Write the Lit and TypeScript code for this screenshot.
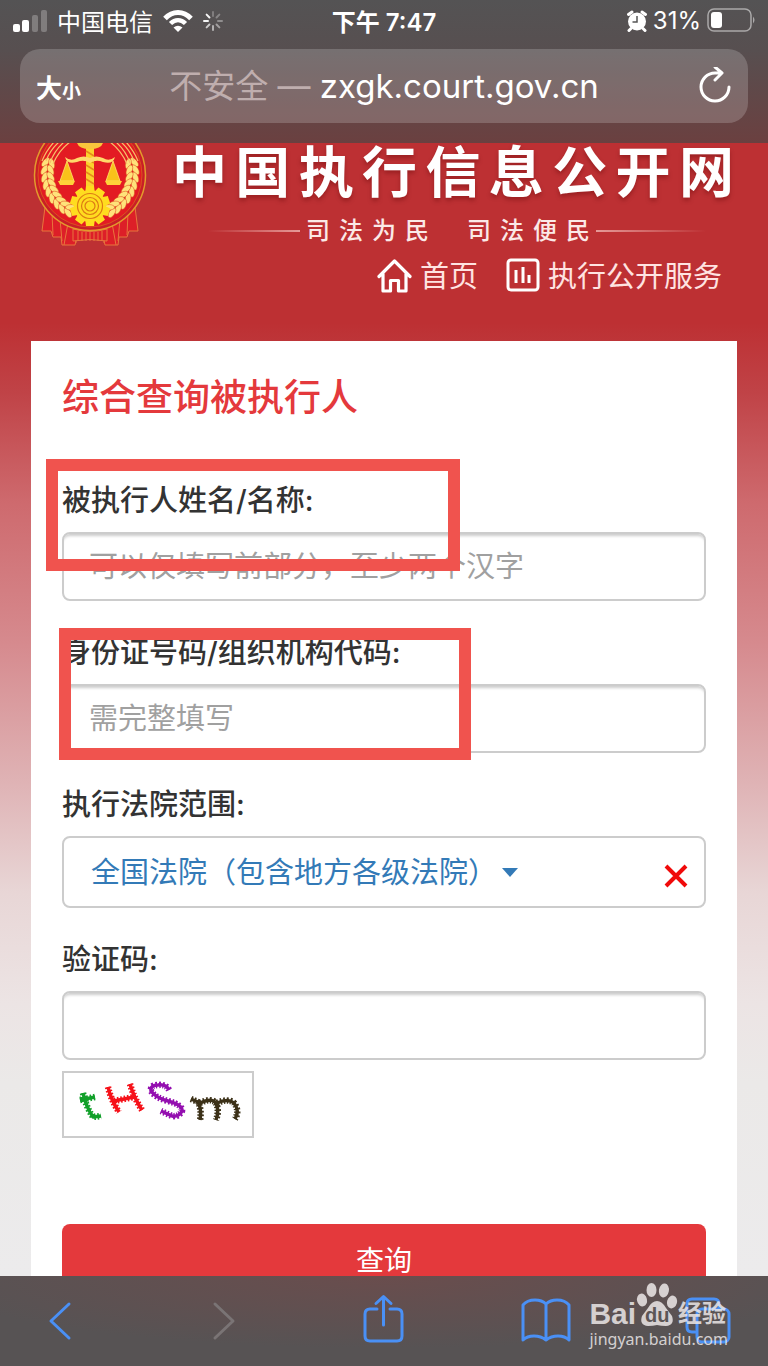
import { LitElement, html, svg, css } from "lit";
import { customElement } from "lit/decorators.js";

const chars = (text: string) => [...text].map((c) => html`<span>${c}</span>`);

@customElement("status-bar")
class StatusBar extends LitElement {
  static styles = css`
    :host { display: grid; grid-template-columns: 1fr auto 1fr; align-items: center; height: 41px; padding: 0 12px; color: #fff; font-size: 24px; }
    .side { display: flex; align-items: center; gap: 10px; }
    .end { justify-content: flex-end; gap: 6px; }
    .time { font-weight: 600; }
  `;
  render() {
    return html`
      <div class="side">
        <svg width="35" height="24" viewBox="0 0 35 24" fill="#fff">
          <rect x="1" y="15" width="7" height="8" rx="2" /><rect x="10" y="11" width="7" height="12" rx="2" />
          <g opacity=".25"><rect x="20" y="6" width="6" height="17" rx="2" /><rect x="29" y="1" width="6" height="22" rx="2" /></g>
        </svg>
        <span>中国电信</span>
        <svg width="30" height="24" viewBox="0 0 30 24" fill="none" stroke="#fff">
          <path d="M2 9.5C9.500 1.500 20.500 1.500 28 9.500" stroke-width="5" />
          <path d="M7.500 14.500C12 10 18 10 22.500 14.500" stroke-width="4.500" />
          <path d="M15 23l-4.500-4.500q4.500-3.500 9 0z" fill="#fff" stroke="none" />
        </svg>
        <svg width="20" height="22" viewBox="-10 -11 20 22" stroke="#fff" stroke-width="2" stroke-linecap="round">
          ${[0.25, 0.3, 0.35, 0.45, 0.55, 0.7, 0.95, 0.95].map((o, i) => svg`<path d="M0-5V-9" opacity=${o} transform="rotate(${i * 45})" />`)}
        </svg>
      </div>
      <span class="time">下午 7:47</span>
      <div class="side end">
        <svg width="20" height="22" viewBox="0 0 20 22">
          <circle cx="10" cy="11.500" r="9" fill="#fff" />
          <path d="M1.500 4.500L5 2M18.500 4.500L15 2M4 18.500L2 20.500M16 18.500l2 2" stroke="#fff" stroke-width="3" stroke-linecap="round" />
          <path d="M10 6v6H5.500" fill="none" stroke="#555" stroke-width="1.500" />
        </svg>
        <span>31%</span>
        <svg width="49" height="25" viewBox="0 0 49 25">
          <rect x="1" y="1" width="43" height="22" rx="6" fill="none" stroke="#fff" stroke-width="1.500" opacity=".5" />
          <rect x="4" y="4" width="11" height="16" rx="3" fill="#fff" />
          <path d="M46 8.500q3 3.500 0 7z" fill="#fff" opacity=".5" />
        </svg>
      </div>`;
  }
}

@customElement("site-banner")
class SiteBanner extends LitElement {
  static styles = css`
    :host { display: block; height: 198px; padding: 0 34px 0 32px; }
    .brand { display: flex; gap: 20px; }
    .emblem { flex: none; }
    .words { flex: 1; display: flex; flex-direction: column; color: #fff; }
    h1 { margin: 0; display: flex; justify-content: space-between; font-size: 55px; line-height: 58px; font-weight: 700; text-shadow: 0 3px 4px rgba(90, 0, 0, .35); }
    .motto { display: flex; align-items: center; justify-content: center; gap: 6px; padding: 0 28px 0 36px; margin: 14px 0 0; line-height: 32px; font-size: 24px; font-weight: 500; color: #fbe9e7; }
    .phrase { display: flex; gap: 9px; }
    .phrase + .phrase { margin-left: 32px; }
    .rule { flex: 0 1 92px; height: 2px; background: linear-gradient(90deg, transparent, #e59a98); }
    .rule:last-child { flex: 1; background: linear-gradient(270deg, transparent, #e59a98); }
    nav { display: flex; justify-content: flex-end; gap: 28px; padding: 4px 12px 0 0; }
    a { display: flex; align-items: center; gap: 8px; color: #ffe3e1; text-decoration: none; font-size: 29px; line-height: 44px; font-weight: 400; }
    a svg { margin-bottom: 4px; }
  `;
  private wheat(side: number) {
    return svg`<g transform="translate(58 32) scale(${side} 1)">
      ${[0, 1, 2, 3, 4, 5, 6, 7, 8].map((i) => {
        const a = ((i * 9.5 - 14) * Math.PI) / 180;
        const r = 43 - i * 0.3;
        const d = (a * 180) / Math.PI;
        return svg`<g transform="translate(${Math.cos(a) * r} ${Math.sin(a) * r}) rotate(${d})" fill="#ffe27a" stroke="#dc4a1d" stroke-width=".5">
          <ellipse cx="3.500" cy="0" rx="2.800" ry="5.500" transform="rotate(-28)" /><ellipse cx="-3.500" cy="0" rx="2.800" ry="5.500" transform="rotate(28)" /></g>`;
      })}
      <g fill="none" stroke="#f6c06a" stroke-width="1.200"><path d="M48-14Q44-24 36-33" /><path d="M44-14Q40-25 31-33" /><path d="M40-12Q36-24 26-33" /><path d="M37-11Q31-25 20-33" /></g>
    </g>`;
  }
  render() {
    return html`
      <div class="brand">
        <svg class="emblem" width="120" height="108" viewBox="0 0 120 108" role="img" aria-label="法院徽章">
          <g fill="#dd1f28" stroke="#e8763c" stroke-width="1">
            <path d="M13 64L10 88h9l2 6h8l1 8h13l4-18h22l4 18h13l1-8h8l2-6h9l-3-24z" />
            <path d="M20 70l1 22M28 76l2 22M36 80l-4 22M44 84v16M96 70l-1 22M88 76l-2 22M80 80l4 22M72 84v16" fill="none" />
            <path d="M41 86q17 5 34 0v12q-17-3-34 0z" /><path d="M46 88v10M50 89v9M54 89v9M58 89v9M62 89v9M66 89v9M70 88v10" fill="none" />
          </g>
          <circle cx="58" cy="32" r="55.500" fill="#c91f27" stroke="#e39a2c" stroke-width="1.500" />
          <circle cx="58" cy="32" r="52" fill="#e31b23" stroke="#d9541f" />
          ${this.wheat(1)}${this.wheat(-1)}
          <path d="M54 2h8v44h-8z" fill="#fbd12d" />
          <path d="M54 8l8 5M54 15l8 5M54 22l8 5M54 29l8 5M54 36l8 5" stroke="#e58a1a" stroke-width="1.500" />
          <path d="M45 0h26q-2 6-13 6T45 0z" fill="#f8c63c" />
          <path d="M33 14q6 5 12 1 7-3 13 0 6-3 13 0 6 4 12-1-2 8-12 5-7-3-13 1-6-4-13-1-10 3-12-5z" fill="#ffd96a" />
          <path d="M35 18l7 20h-14zM81 18l7 20h-14z" fill="#f9c21a" stroke="#ffe46c" stroke-width=".8" /><path d="M26 38h17l-2 4H28zM73 38h17l-2 4H75z" fill="#ffd23a" />
          <g fill="#ffdc1f">
            <circle cx="58" cy="63" r="16" />
            ${[0, 36, 72, 108, 144, 180, 216, 252, 288, 324].map((d) => svg`<path d="M54 43h8l1 8H53z" transform="rotate(${d} 58 63)" />`)}
          </g>
          <g fill="none" stroke="#dd7a14" stroke-width="1.200"><circle cx="58" cy="63" r="12.500" /><circle cx="58" cy="63" r="8.500" /><circle cx="58" cy="63" r="5" /></g>
        </svg>
        <div class="words">
          <h1>${chars("中国执行信息公开网")}</h1>
          <p class="motto"><span class="rule"></span><span class="phrase">${chars("司法为民")}</span><span class="phrase">${chars("司法便民")}</span><span class="rule"></span></p>
        </div>
      </div>
      <nav>
        <a href="#home">
          <svg width="35" height="35" viewBox="0 0 35 35" fill="none" stroke="#fff" stroke-width="3.200" stroke-linejoin="round"><path d="M6 16v17h7.500V22.500h8V33H29V16M2 18.500L17.500 3 33 18.500" stroke-linecap="round" /></svg>
          首页</a>
        <a href="#service">
          <svg width="34" height="34" viewBox="0 0 34 34" fill="none" stroke="#fff" stroke-width="3"><rect x="2" y="2" width="30" height="30" rx="3" /><path d="M10 12v13M17 9v16M23 17v8" /></svg>
          执行公开服务</a>
      </nav>`;
  }
}

@customElement("query-form")
class QueryForm extends LitElement {
  static styles = css`
    :host { display: block; margin: 0 31px; padding: 33px 31px 40px; background: #fff; color: #333; font-size: 29px; }
    h2 { margin: 0 0 59px; font-size: 37px; line-height: 48px; font-weight: 500; color: #e4393c; }
    .field { position: relative; margin-bottom: 32px; }
    label { display: block; margin-bottom: 11px; line-height: 40px; font-size: 29px; font-weight: 500; }
    input, .choice { box-sizing: border-box; display: block; width: 100%; height: 69px; border: 2px solid #ccc; border-radius: 8px; background: #fff; }
    input { padding: 0 25px; font: inherit; color: #555; box-shadow: inset 0 4px 3px -2px rgba(0, 0, 0, .2); }
    input::placeholder { color: #a0a0a0; opacity: 1; }
    .choice { display: flex; align-items: center; height: 72px; padding: 0 16px 0 27px; }
    select { appearance: none; border: 0; padding: 0; background: none; font: inherit; color: #337ab7; }
    .caret { margin-left: 4px; }
    .clear { margin: 8px 0 0 auto; padding: 0; border: 0; background: none; display: flex; }
    .captcha { display: block; margin: 11px 0 86px; padding: 0; border: 2px solid #ccc; background: #fff; }
    .captcha svg { display: block; }
    .submit { width: 100%; height: 69px; border: 0; border-radius: 8px; background: #e4393c; color: #fff; font: inherit; font-size: 28px; }
    .mark { position: absolute; box-sizing: border-box; border: 12px solid #f0534e; pointer-events: none; z-index: 1; }
    .mark-name { left: -16px; top: -22px; width: 414px; height: 112px; }
    .mark-id { left: -3px; top: -5px; width: 412px; height: 132px; }
  `;
  private glyph(color: string, d: string) {
    return svg`<path d=${d} stroke=${color} stroke-width="3.500" /><path d=${d} stroke=${color} stroke-width="6.500" stroke-dasharray="1.600 1.800" />`;
  }
  render() {
    return html`<form @submit=${(e: Event) => e.preventDefault()}>
      <h2>综合查询被执行人</h2>
      <div class="field"><label for="name">被执行人姓名/名称:</label><input id="name" placeholder="可以仅填写前部分，至少两个汉字" /><span class="mark mark-name"></span></div>
      <div class="field"><label for="card">身份证号码/组织机构代码:</label><input id="card" placeholder="需完整填写" /><span class="mark mark-id"></span></div>
      <div class="field"><label for="court">执行法院范围:</label>
        <div class="choice">
          <select id="court"><option>全国法院（包含地方各级法院）</option></select>
          <svg class="caret" width="16" height="9" viewBox="0 0 16 9"><path d="M0 0h16L8 9z" fill="#337ab7" /></svg>
          <button class="clear" type="button" aria-label="清除"><svg width="24" height="24" viewBox="0 0 24 24" stroke="#f00a0a" stroke-width="4"><path d="M2 2l20 20M22 2L2 22" /></svg></button>
        </div>
      </div>
      <div class="field"><label for="code">验证码:</label><input id="code" />
        <button class="captcha" type="button" aria-label="刷新验证码">
          <svg width="188" height="63" viewBox="0 0 188 63" fill="none" stroke-linejoin="round">
            ${this.glyph("#12a02a", "M19 20Q22 34 29 44L37 43M16 27L31 24")}
            ${this.glyph("#f6121a", "M44 14Q47 27 55 39M66 11Q70 25 78 37M50 28L70 24")}
            ${this.glyph("#940fb0", "M105 17Q102 11 94 12 86 12 87 18 92 25 104 28 119 32 118 38 115 44 108 43L97 38")}
            ${this.glyph("#3c3118", "M127 26L134 29Q138 37 136 47M136 30Q146 25 151 29 156 36 152 47M153 30Q164 25 170 30 176 38 171 46")}
          </svg>
        </button>
      </div>
      <button class="submit">查询</button>
    </form>`;
  }
}

@customElement("tool-bar")
class ToolBar extends LitElement {
  static styles = css`
    :host { position: relative; display: flex; flex: none; justify-content: space-between; align-items: center; height: 90px; padding: 0 37px; background: radial-gradient(ellipse 60% 80% at 50% 0, #6a4d4d, transparent), #575354; }
    button { width: 48px; height: 52px; padding: 0; border: 0; background: none; color: #4a90f5; }
    button:disabled { color: #7a7475; }
    svg { display: block; overflow: visible; }
    .watermark { position: absolute; right: 40px; top: 8px; color: rgba(236, 232, 232, .85); }
    .logo { display: flex; align-items: flex-end; height: 46px; }
    .bai { font: 700 30px/32px "Liberation Sans", sans-serif; }
    .paw { margin-bottom: 3px; }
    .cn { font-size: 24px; line-height: 32px; font-weight: 700; }
    .site { font: 16px/18px "Noto Sans", sans-serif; }
    .du { font: 700 20px "Liberation Sans", sans-serif; }
  `;
  private icon(body: unknown) {
    return html`<svg width="48" height="52" viewBox="0 0 48 52" fill="none" stroke="currentColor" stroke-width="3" stroke-linecap="round" stroke-linejoin="round">${body}</svg>`;
  }
  render() {
    return html`
      <button aria-label="后退">${this.icon(svg`<path d="M32 9L14 26l18 17" />`)}</button>
      <button aria-label="前进" disabled>${this.icon(svg`<path d="M16 9l18 17-18 17" />`)}</button>
      <button aria-label="分享">${this.icon(svg`<path d="M17 14h-7q-5 0-5 5v22q0 5 5 5h27q5 0 5-5V19q0-5-5-5h-7M23.500 30V2M16 8.500L23.500 1.500 31 8.500" />`)}</button>
      <button aria-label="书签">${this.icon(svg`<path d="M24 9V45M24 9Q20 5 13 5 5 5 1 10v35Q5 41 12 41 19 41 24 45 29 41 36 41 43 41 47 45V10Q43 5 35 5 28 5 24 9" />`)}</button>
      <button aria-label="标签页">${this.icon(svg`<path d="M12 37H9q-5 0-5-5V9q0-5 5-5h22q5 0 5 5v4" /><rect x="14" y="14" width="32" height="33" rx="5" />`)}</button>
      <div class="watermark">
        <div class="logo"><span class="bai">Bai</span>
          <svg class="paw" width="42" height="45" viewBox="0 0 42 45" fill="currentColor">
            <ellipse cx="6" cy="18" rx="5" ry="6.500" transform="rotate(-12 6 18)" /><ellipse cx="15.500" cy="8" rx="5" ry="7" /><ellipse cx="28" cy="8.500" rx="5" ry="7" transform="rotate(10 28 8)" /><ellipse cx="36" cy="20" rx="5" ry="6.500" transform="rotate(15 36 20)" />
            <path d="M21 19q5 0 9 7l6 8q3 9-6 10-5 0-9-1-4 1-9 1-9-1-6-10l6-8q4-7 9-7z" />
            <text class="du" x="9" y="40" fill="#5c5656">du</text>
          </svg><span class="cn">经验</span></div>
        <div class="site">jingyan.baidu.com</div>
      </div>`;
  }
}

@customElement("app-root")
class AppRoot extends LitElement {
  static styles = css`
    :host { display: flex; flex-direction: column; height: 100vh; overflow: hidden; font-family: Inter, "Noto Sans CJK SC", sans-serif; }
    header { flex: none; background: linear-gradient(#545354, #574f50 35%, #6b4040); padding-bottom: 20px; }
    .address { display: grid; grid-template-columns: 60px 1fr 60px; align-items: center; margin: 8px 20px 0; height: 74px; padding: 0 16px; border-radius: 20px; background: rgba(255, 255, 255, .19); color: #fff; }
    .address button { display: flex; align-items: baseline; padding: 0; border: 0; background: none; color: #fff; font: 700 26px "Noto Sans CJK SC", sans-serif; }
    .address .reload { justify-content: flex-end; }
    .small { font-size: 19px; }
    .url { padding-bottom: 4px; text-align: center; font-size: 33px; white-space: nowrap; }
    .insecure { color: #bfaeae; font-weight: 400; }
    main { flex: 1; min-height: 0; background: linear-gradient(#bd3033 0, #bd3033 180px, #c04347 250px, #ce6a6e 360px, #d68a8e 500px, #dfb3b5 640px, #e8d6d6 750px, #ece4e4 860px, #ebe9e8 940px, #ecebec 1130px); }
  `;
  render() {
    return html`
      <header>
        <status-bar></status-bar>
        <div class="address">
          <button aria-label="文字大小"><span>大</span><span class="small">小</span></button>
          <div class="url"><span class="insecure">不安全 — </span>zxgk.court.gov.cn</div>
          <button class="reload" aria-label="重新载入"><svg width="34" height="38" viewBox="0 0 34 38" fill="none" stroke="#fff" stroke-width="3" stroke-linecap="round" stroke-linejoin="round"><path d="M31 20A14 14 0 1 1 17 6h6M17 0l7 6-7 7" /></svg></button>
        </div>
      </header>
      <main><site-banner></site-banner><query-form></query-form></main>
      <tool-bar></tool-bar>`;
  }
}
